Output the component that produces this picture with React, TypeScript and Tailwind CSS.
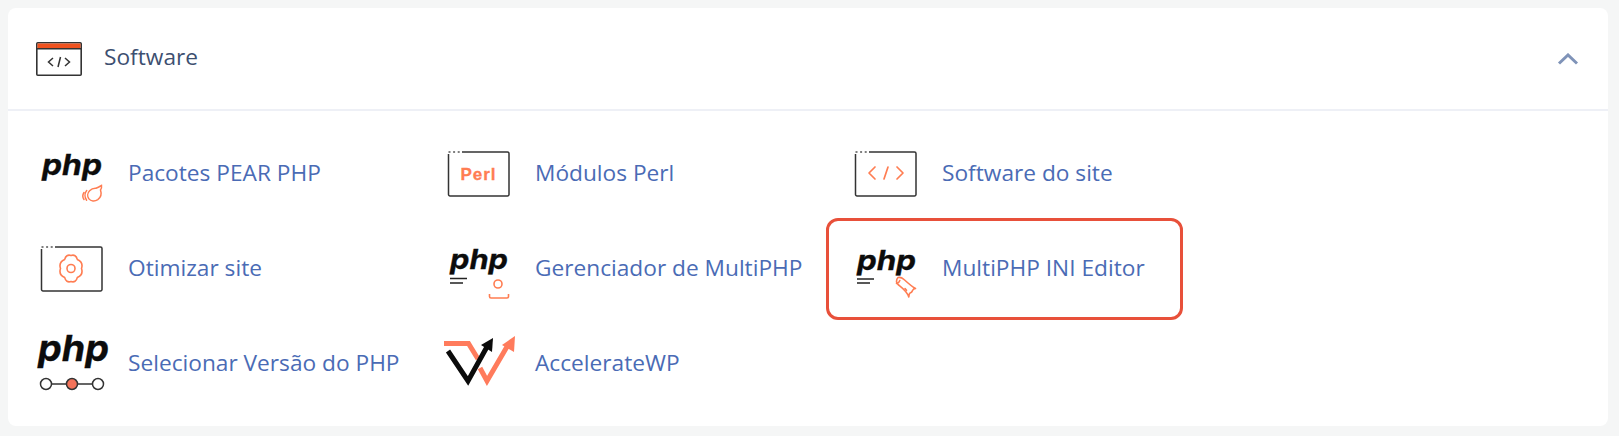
const items = [
  { label: "Pacotes PEAR PHP", icon: <PearIcon /> },
  { label: "Módulos Perl", icon: <PerlIcon /> },
  { label: "Software do site", icon: <SiteIcon /> },
  { label: "Otimizar site", icon: <OptimizeIcon /> },
  { label: "Gerenciador de MultiPHP", icon: <ManagerIcon /> },
  { label: "MultiPHP INI Editor", icon: <IniIcon />, highlight: true },
  { label: "Selecionar Versão do PHP", icon: <VersionIcon /> },
  { label: "AccelerateWP", icon: <AccelerateIcon /> },
]

const ORANGE = "#ff7d52"

function PhpText({ x, y, size, width }: { x: number; y: number; size: number; width: number }) {
  return (
    <text
      x={x}
      y={y}
      fontFamily="Inter, sans-serif"
      fontWeight="700"
      fontStyle="italic"
      fontSize={size}
      textLength={width}
      lengthAdjust="spacingAndGlyphs"
      fill="#0c0c0c"
      stroke="#0c0c0c"
      strokeWidth="0.300"
    >
      php
    </text>
  )
}

function Frame() {
  return (
    <>
      <path d="M31 18H76.500a1.500 1.500 0 0 1 1.500 1.500V60.500a1.500 1.500 0 0 1-1.500 1.500H19a1.500 1.500 0 0 1-1.500-1.500V20" fill="none" stroke="#333" strokeWidth="1.500" />
      <path d="M17.500 18H30" fill="none" stroke="#555" strokeWidth="1.300" strokeDasharray="2 2.600" />
    </>
  )
}

function IconBox({ children }: { children: React.ReactNode }) {
  return (
    <svg width="104" height="80" viewBox="0 0 104 80" className="shrink-0">
      {children}
    </svg>
  )
}

function PearIcon() {
  return (
    <IconBox>
      <PhpText x={18} y={41} size={29} width={60} />
      <path
        d="M77.500 51.500c.3 1.900-.1 3.300-1 4.500 1.200 3.700.3 7.500-2.700 9.600-3 2-7 1.700-8.900-.7-1.800-2.300-1.500-5.800.7-8.100 1.800-1.900 4.400-2.800 6.400-2.600 1.500-.5 3.400-1.500 5.500-2.700ZM62.700 56.500c-2.200 2.600-2.200 6.700-.1 9.700M60 58.500c-1.500 2.200-1.400 5 0 7"
        fill="none"
        stroke={ORANGE}
        strokeWidth="1.500"
        strokeLinecap="round"
      />
    </IconBox>
  )
}

function PerlIcon() {
  return (
    <IconBox>
      <Frame />
      <text x={47.500} y={45.500} textAnchor="middle" fontFamily="'Liberation Sans', sans-serif" fontWeight="700" fontSize="17" fill={ORANGE} stroke={ORANGE} strokeWidth="0.300" letterSpacing="1">
        Perl
      </text>
    </IconBox>
  )
}

function SiteIcon() {
  return (
    <IconBox>
      <Frame />
      <g fill="none" stroke={ORANGE} strokeWidth="1.700" strokeLinecap="round" strokeLinejoin="round">
        <path d="M37 33l-6 6 6 6" />
        <path d="M50 33l-4 12" />
        <path d="M59 33l6 6-6 6" />
      </g>
    </IconBox>
  )
}

function OptimizeIcon() {
  return (
    <IconBox>
      <Frame />
      <g fill="none" stroke={ORANGE} strokeWidth="1.600" strokeLinejoin="round">
        <path d="M57.500 39.500Q59.600 33.200 53.300 30.400Q51.900 25 47 26.500Q42.100 25 40.700 30.400Q34.400 33.200 36.500 39.500Q34.400 45.800 40.700 48.600Q42.100 54 47 52.500Q51.900 54 53.300 48.600Q59.600 45.800 57.500 39.500Z" />
        <circle cx="47" cy="39.500" r="4" />
      </g>
    </IconBox>
  )
}

function ManagerIcon() {
  return (
    <IconBox>
      <PhpText x={19} y={39.500} size={27} width={58} />
      <path d="M19 49.500H36M19 54H32" stroke="#222" strokeWidth="1.500" />
      <circle cx="67" cy="55" r="4" fill="none" stroke={ORANGE} strokeWidth="1.600" />
      <path d="M58.500 65v2.500a1.500 1.500 0 0 0 1.500 1.500h16a1.500 1.500 0 0 0 1.500-1.500V65" fill="none" stroke={ORANGE} strokeWidth="1.600" />
    </IconBox>
  )
}

function IniIcon() {
  return (
    <IconBox>
      <PhpText x={19} y={40.500} size={27} width={59} />
      <path d="M19 50H36M19 54H32" stroke="#222" strokeWidth="1.500" />
      <g fill="none" stroke={ORANGE} strokeWidth="1.600" strokeLinecap="round" strokeLinejoin="round">
        <path d="M60 48.500c2.300-.6 4.300.4 6 2 3.500 3.200 7 6.500 11.500 9-1.500 0-2.500 1-3 2s-.6 2-2 2.200c-1 .2-1.500 1.500-1.700 4.300-1.500-4.500-5-7.800-8.800-10.800-2-1.500-3.500-2.700-3.500-4.700 0-1.700.7-3.300 1.500-4Z" />
        <path d="M58.500 54.500c1.300-.2 2.800-1.300 3.300-3M67 59.500l1.500 1.800" />
      </g>
    </IconBox>
  )
}

function VersionIcon() {
  return (
    <IconBox>
      <PhpText x={14} y={37} size={36} width={71} />
      <g stroke="#333" strokeWidth="1.500">
        <path d="M28 60H42M54 60H68" />
        <circle cx="22" cy="60" r="5.500" fill="#fff" />
        <circle cx="48" cy="60" r="5.500" fill="#f4735a" />
        <circle cx="74" cy="60" r="5.500" fill="#fff" />
      </g>
    </IconBox>
  )
}

function AccelerateIcon() {
  return (
    <IconBox>
      <g fill="none" strokeWidth="5">
        <path d="M13 19.500H37.500L47 35" stroke="#ff7b5c" />
        <path d="M17 27L37 57L57 21" stroke="#0b0b0b" />
        <path d="M49 44L56 57L77 21" stroke="#ff7b5c" />
      </g>
      <path d="M62 14L61 28L50 21Z" fill="#0b0b0b" />
      <path d="M84 12L83 28L71 21Z" fill="#ff7b5c" />
    </IconBox>
  )
}

export default function App() {
  return (
    <div className="h-[436px] bg-[#f5f6f6] pt-2 pl-2 pr-[11px] pb-[10px]" style={{ fontFamily: "'Open Sans', sans-serif" }}>
      <div className="h-full rounded-lg bg-white">
        <div className="flex h-[103px] items-center border-b-2 border-[#eef0f6] pl-7 pr-[29px]">
          <svg width="46" height="34" viewBox="0 0 46 34" className="shrink-0">
            <rect x="0.800" y="0.800" width="44.400" height="32.400" rx="1" fill="#fff" stroke="#333" strokeWidth="1.600" />
            <rect x="1.500" y="1.500" width="43" height="5" fill="#f0521f" />
            <path d="M1 6.800H45" stroke="#333" strokeWidth="1.500" />
            <g fill="none" stroke="#333" strokeWidth="1.500">
              <path d="M17 16l-4.500 4 4.500 4M24.500 15l-2.500 10M29 16l4.500 4-4.500 4" />
            </g>
          </svg>
          <span className="mb-[2px] ml-[22px] text-[22.700px] text-[#3d4f70]">Software</span>
          <svg width="22" height="12" viewBox="0 0 22 12" className="ml-auto">
            <path d="M2 10.500L11 2l9 8.500" fill="none" stroke="#7f93b8" strokeWidth="3" />
          </svg>
        </div>
        <div className="grid grid-cols-[repeat(3,407px)] auto-rows-[95px] pl-4 pt-[15px]">
          {items.map((item) => (
            <div key={item.label} className="relative flex items-center">
              {item.icon}
              <a className="mb-[2px] text-[22.700px] leading-7 text-[#4a6bb5]">{item.label}</a>
              {item.highlight && (
                <div className="absolute -left-3 -top-[3px] h-[102px] w-[357px] rounded-xl border-[3.500px] border-[#e8503a]" />
              )}
            </div>
          ))}
        </div>
      </div>
    </div>
  )
}
